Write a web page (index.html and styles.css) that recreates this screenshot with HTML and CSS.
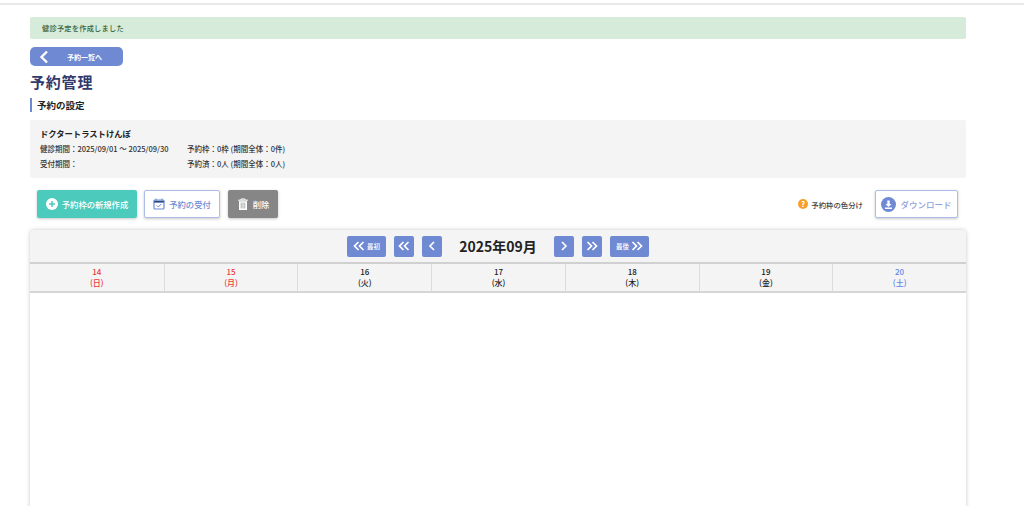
FILE: index.html
```html
<!DOCTYPE html>
<html lang="ja">
<head>
<meta charset="utf-8">
<title>予約管理</title>
<link rel="stylesheet" href="styles.css">
</head>
<body>
<div class="topline"></div>
<main class="page">
  <div class="alert">健診予定を作成しました</div>
  <a class="back"><svg class="back-ico" viewBox="0 0 10 14"><path d="M8 1.500 2.500 7 8 12.500" fill="none" stroke="#fff" stroke-width="2.400"/></svg><span>予約一覧へ</span></a>
  <h1 class="title">予約管理</h1>
  <h2 class="section">予約の設定</h2>
  <section class="info">
    <div class="info-name">ドクタートラストけんぽ</div>
    <div class="info-grid">
      <span>健診期間：2025/09/01 ～ 2025/09/30</span><span>予約枠：0枠 (期間全体：0件)</span>
      <span>受付期間：</span><span>予約済：0人 (期間全体：0人)</span>
    </div>
  </section>
  <div class="actions">
    <button class="btn btn-teal"><svg class="ico" viewBox="0 0 12 12"><circle cx="6" cy="6" r="6" fill="#fff"/><path d="M6 3v6M3 6h6" stroke="#4ccabc" stroke-width="1.500"/></svg>予約枠の新規作成</button>
    <button class="btn btn-outline btn-recv"><svg class="ico" viewBox="0 0 12 12"><rect x="1" y="2" width="10" height="9" rx="1" fill="none" stroke="#6f8ad2" stroke-width="1.200"/><path d="M1 3h10v1.500H1zM3 .5v2M9 .5v2" stroke="#6f8ad2" stroke-width="1"/><path d="M3.800 7.500 5.300 9 8.200 6" fill="none" stroke="#6f8ad2"/></svg>予約の受付</button>
    <button class="btn btn-gray"><svg class="ico" viewBox="0 0 12 12"><path d="M1 2.200h10M4 2V1h4v1" stroke="#fff" stroke-width="1" fill="none"/><path d="M2 3.200h8V12H2z" fill="#fff"/><path d="M4.200 4.500v6M6 4.500v6M7.800 4.500v6" stroke="#868686" stroke-width=".7"/></svg>削除</button>
    <div class="spacer"></div>
    <a class="legend"><svg class="legend-ico" viewBox="0 0 10 10"><circle cx="5" cy="5" r="5" fill="#f5a02b"/><text x="5" y="7.800" text-anchor="middle" class="legend-q">?</text></svg>予約枠の色分け</a>
    <button class="btn btn-outline btn-dl"><svg class="dl-ico" viewBox="0 0 15 15"><circle cx="7.500" cy="7.500" r="7.500" fill="#6f8ad2"/><path d="M6.300 3.500h2.400v3.400h1.900L7.500 10 4.400 6.900h1.900zM4 10.500h7V12H4z" fill="#fff"/></svg>ダウンロード</button>
  </div>
  <section class="calendar">
    <div class="cal-nav">
      <button class="nav nav-wide"><svg class="chev" viewBox="0 0 12 10"><path d="M5.500 1 1.500 5l4 4M10.500 1l-4 4 4 4" /></svg><span>最初</span></button>
      <button class="nav"><svg class="chev" viewBox="0 0 12 10"><path d="M5.500 1 1.500 5l4 4M10.500 1l-4 4 4 4" /></svg></button>
      <button class="nav"><svg class="chev" viewBox="0 0 12 10"><path d="M8 1 4 5l4 4" /></svg></button>
      <div class="month">2025年09月</div>
      <button class="nav"><svg class="chev" viewBox="0 0 12 10"><path d="M4 1l4 4-4 4" /></svg></button>
      <button class="nav"><svg class="chev" viewBox="0 0 12 10"><path d="M1.500 1l4 4-4 4M6.500 1l4 4-4 4" /></svg></button>
      <button class="nav nav-wide"><span>最後</span><svg class="chev" viewBox="0 0 12 10"><path d="M1.500 1l4 4-4 4M6.500 1l4 4-4 4" /></svg></button>
    </div>
    <div class="days">
      <div class="day red">14<br>(日)</div>
      <div class="day red">15<br>(月)</div>
      <div class="day">16<br>(火)</div>
      <div class="day">17<br>(水)</div>
      <div class="day">18<br>(木)</div>
      <div class="day">19<br>(金)</div>
      <div class="day blue">20<br>(土)</div>
    </div>
  </section>
</main>
</body>
</html>
```
FILE: styles.css
```css
* { box-sizing: border-box; }
html, body { margin: 0; height: 506px; overflow: hidden; background: #fff; }
body { font-family: "Noto Sans CJK JP", "Noto Sans", sans-serif; color: #333; position: relative; }
.topline { height: 5px; background: #fff; border-bottom: 2px solid #e9e9e9; }
.page { width: 936px; margin-left: 30px; padding-top: 12px; }
.alert { height: 22px; background: #d6ebd9; border-radius: 2px; padding-left: 12px; font-size: 7.200px; font-weight: 500; line-height: 22px; color: #35643f; letter-spacing: .25px; }
.back { display: flex; align-items: center; width: 93px; height: 19px; margin-top: 8px; background: #6f8ad2; border-radius: 5px; color: #fff; font-size: 7px; font-weight: 700; padding-left: 9px; }
.back-ico { width: 10px; height: 14px; }
.back span { margin-left: 18px; }
.title { margin: 5px 0 0; height: 22px; font-size: 15px; line-height: 22px; font-weight: 700; color: #33396b; letter-spacing: .8px; }
.section { margin: 5px 0 0; height: 14px; border-left: 2px solid #6f8ad2; padding-left: 5px; font-size: 9.500px; line-height: 14px; font-weight: 700; color: #222; }
.info { height: 58px; margin-top: 8px; padding: 7px 10px 0; background: #f4f4f4; border-radius: 2px; }
.info-name { font-size: 8.300px; line-height: 13px; font-weight: 700; color: #222; }
.info-grid { display: grid; grid-template-columns: 147px 1fr; row-gap: 5px; margin-top: 4px; font-size: 7.500px; font-weight: 500; line-height: 10px; color: #333; }
.actions { display: flex; align-items: center; height: 28px; margin-top: 12px; padding: 0 8px 0 7px; }
.btn { display: flex; align-items: center; justify-content: center; height: 28px; padding: 0; border: 0; border-radius: 2px; font-family: inherit; font-size: 8.300px; font-weight: 500; box-shadow: 0 1px 3px rgba(0,0,0,.22); }
.btn-teal { width: 100px; background: #4ccabc; color: #fff; }
.btn-outline { background: #fff; border: 1px solid #aebde8; color: #6f8ad2; }
.btn-recv { width: 76px; margin-left: 7px; }
.btn-gray { width: 50px; margin-left: 8px; background: #868686; color: #fff; }
.ico { width: 12px; height: 12px; margin-right: 4px; flex: none; }
.spacer { flex: 1; }
.legend { display: flex; align-items: center; font-size: 7.400px; font-weight: 500; color: #444; margin-right: 12px; }
.legend-ico { width: 10px; height: 10px; margin-right: 3px; }
.legend-q { font-size: 8px; font-weight: 700; fill: #fff; }
.btn-dl { width: 83px; height: 28px; font-size: 8.500px; color: #8ea3dc; }
.dl-ico { width: 15px; height: 15px; margin-right: 4px; flex: none; }
.calendar { height: 280px; margin-top: 12px; border-radius: 4px 4px 0 0; box-shadow: 0 0 4px rgba(0,0,0,.22); }
.cal-nav { display: flex; align-items: center; justify-content: center; height: 34px; background: #f4f4f4; border-bottom: 2px solid #d0d0d0; border-radius: 4px 4px 0 0; }
.nav { display: flex; align-items: center; justify-content: center; gap: 2px; width: 20px; height: 21px; margin-left: 8px; padding: 0; border: 0; border-radius: 2px; background: #6f8ad2; color: #fff; font-family: inherit; font-size: 6.500px; font-weight: 500; }
.nav-wide:first-child { width: 39px; margin-left: 0; }
.nav-wide:last-child { width: 39px; }
.chev { width: 12px; height: 10px; flex: none; fill: none; stroke: #fff; stroke-width: 1.700; }
.month { width: 112px; text-align: center; font-size: 14px; font-weight: 700; color: #222; }
.month + .nav { margin-left: 0; }
.days { display: grid; grid-template-columns: repeat(7, 1fr); height: 29px; background: #f4f4f4; border-bottom: 2px solid #d6d6d6; }
.day { text-align: center; font-size: 8px; font-weight: 500; line-height: 11px; padding-top: 2px; color: #222; border-left: 1px solid #dcdcdc; }
.day:first-child { border-left: 0; }
.red { color: #ef3a3a; }
.blue { color: #5f86e8; }
```
